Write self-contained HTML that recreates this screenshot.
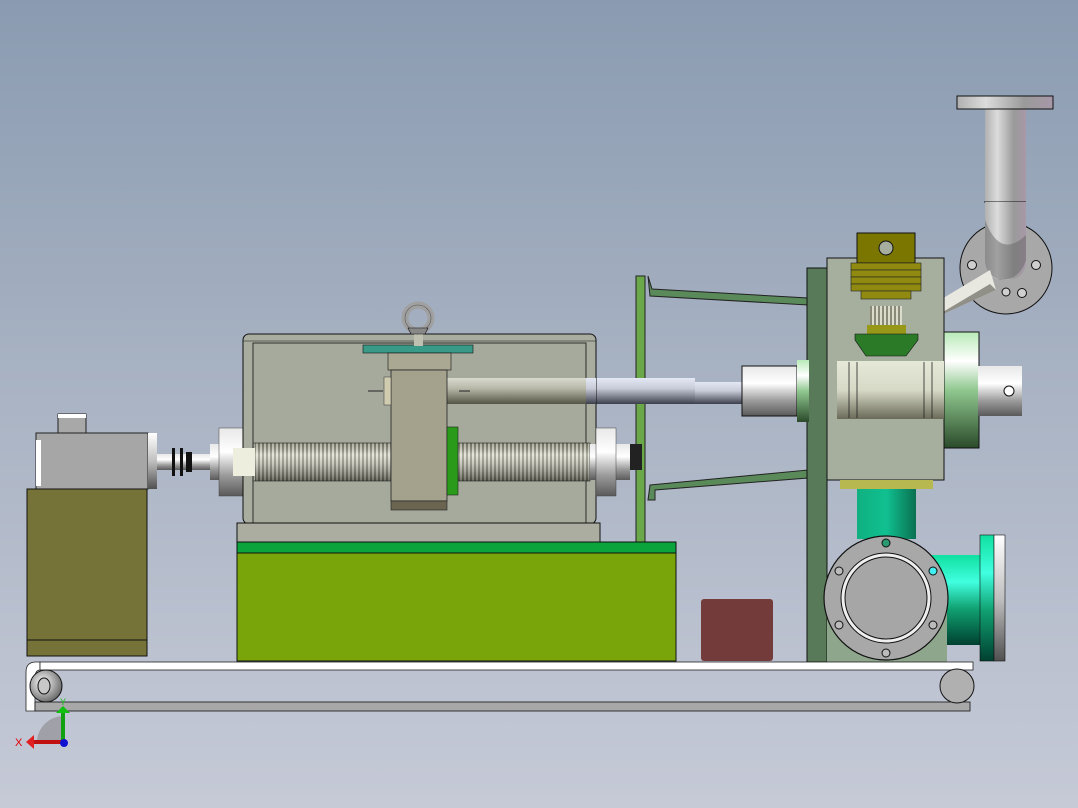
<!DOCTYPE html>
<html><head><meta charset="utf-8"><style>
html,body{margin:0;padding:0;width:1078px;height:808px;overflow:hidden}
body{background:linear-gradient(#8a9bb1,#aab4c4 50%,#c6cad7)}
svg{display:block}
</style></head><body>
<svg width="1078" height="808" viewBox="0 0 1078 808" xmlns="http://www.w3.org/2000/svg" font-family="Liberation Sans, sans-serif">
<defs>
<linearGradient id="cylV" x1="0" y1="0" x2="0" y2="1"><stop offset="0" stop-color="#e8e8e8"/><stop offset=".35" stop-color="#ffffff"/><stop offset=".7" stop-color="#9a9a9a"/><stop offset="1" stop-color="#5a5a5a"/></linearGradient>
<linearGradient id="rodV" x1="0" y1="0" x2="0" y2="1"><stop offset="0" stop-color="#e4e8f4"/><stop offset=".4" stop-color="#c8ccd8"/><stop offset="1" stop-color="#3c3e4c"/></linearGradient>
<linearGradient id="rodIn" x1="0" y1="0" x2="0" y2="1"><stop offset="0" stop-color="#d8dad0"/><stop offset=".4" stop-color="#b8b8a8"/><stop offset="1" stop-color="#555545"/></linearGradient>
<linearGradient id="pipeH" x1="0" y1="0" x2="1" y2="0"><stop offset="0" stop-color="#b0b0b0"/><stop offset=".3" stop-color="#dcdcdc"/><stop offset=".7" stop-color="#9a9a9a"/><stop offset="1" stop-color="#a898a8"/></linearGradient>
<linearGradient id="greenF" x1="0" y1="0" x2="0" y2="1"><stop offset="0" stop-color="#b8eab8"/><stop offset=".25" stop-color="#ffffff"/><stop offset=".5" stop-color="#90c890"/><stop offset="1" stop-color="#2a4a2a"/></linearGradient>
<linearGradient id="tee" x1="0" y1="0" x2="0" y2="1"><stop offset="0" stop-color="#e6e8d8"/><stop offset=".5" stop-color="#d8dac8"/><stop offset="1" stop-color="#6a6a58"/></linearGradient>
<linearGradient id="teal" x1="0" y1="0" x2="1" y2="0"><stop offset="0" stop-color="#10b080"/><stop offset=".5" stop-color="#10c090"/><stop offset="1" stop-color="#0a7050"/></linearGradient>
<linearGradient id="tealH" x1="0" y1="0" x2="0" y2="1"><stop offset="0" stop-color="#10e0a0"/><stop offset=".3" stop-color="#40ffe0"/><stop offset=".6" stop-color="#10a070"/><stop offset="1" stop-color="#004030"/></linearGradient>
<linearGradient id="flR" x1="0" y1="0" x2="0" y2="1"><stop offset="0" stop-color="#ffffff"/><stop offset=".5" stop-color="#c0c0c0"/><stop offset="1" stop-color="#505050"/></linearGradient>
<pattern id="thr" width="4" height="40" patternUnits="userSpaceOnUse"><rect width="4" height="40" fill="#8a8a78"/><rect width="2" height="40" fill="#dcdccc"/></pattern>
<linearGradient id="thrShade" x1="0" y1="0" x2="0" y2="1"><stop offset="0" stop-color="#000" stop-opacity=".2"/><stop offset=".3" stop-color="#fff" stop-opacity=".3"/><stop offset="1" stop-color="#000" stop-opacity=".5"/></linearGradient>
<radialGradient id="roll" cx=".4" cy=".4" r=".6"><stop offset="0" stop-color="#ffffff"/><stop offset="1" stop-color="#707070"/></radialGradient>
</defs>

<!-- Top elbow pipe -->
<circle cx="1006" cy="268" r="46" fill="#a8a8a8" stroke="#111" stroke-width="1"/>
<g fill="#cfcfcf" stroke="#111"><circle cx="1036" cy="265" r="4.5"/><circle cx="1022" cy="293" r="4.5"/><circle cx="972" cy="265" r="4.5"/><circle cx="1006" cy="292" r="4"/></g>
<rect x="985" y="109" width="41" height="95" fill="url(#pipeH)"/>
<line x1="984" y1="202" x2="1026" y2="202" stroke="#111"/>
<path d="M985 202 H1026 V260 Q1026 280 1005 280 Q985 280 985 260Z" fill="url(#pipeH)"/>
<path d="M985 220 Q1000 260 1026 235 V260 Q1020 280 1000 280 Q985 275 985 260Z" fill="#666" opacity=".5"/>
<rect x="957" y="96" width="96" height="13" fill="url(#pipeH)" stroke="#111" stroke-width="1"/>
<path d="M920 312 L990 270 L996 290 L926 322Z" fill="#e8e8e0"/>
<path d="M926 322 L996 290 L990 284 Z" fill="#909088"/>

<!-- Green frame bar and braces -->
<path d="M648 276 L652 289 L808 298 L808 305 L650 296Z" fill="#5a8a5a" stroke="#222" stroke-width="1"/>
<path d="M650 485 L808 470 L808 478 L655 490 L655 500 L648 500Z" fill="#5a8a5a" stroke="#222" stroke-width="1"/>
<rect x="636" y="276" width="9" height="266" fill="#6aa84a" stroke="#222" stroke-width="1"/>

<!-- Rod outside -->
<rect x="596" y="378" width="99" height="26" fill="url(#rodV)"/>
<rect x="695" y="382" width="47" height="22" fill="url(#rodV)"/>
<rect x="742" y="366" width="55" height="50" fill="url(#cylV)" stroke="#111" stroke-width="1"/>

<!-- Motor -->
<rect x="58" y="414" width="28" height="19" fill="#a8a8a8" stroke="#222"/>
<rect x="58" y="414" width="28" height="4" fill="#fff"/>
<rect x="36" y="433" width="112" height="56" fill="#a6a6a6" stroke="#222"/>
<rect x="36" y="440" width="5" height="46" fill="#fff"/>
<rect x="27" y="489" width="120" height="167" fill="#767339" stroke="#111"/>
<line x1="27" y1="640" x2="147" y2="640" stroke="#111"/>
<rect x="148" y="433" width="9" height="56" fill="url(#flR)"/>
<rect x="157" y="454" width="70" height="16" fill="url(#cylV)"/>
<g fill="#111"><rect x="172" y="448" width="3" height="28"/><rect x="180" y="448" width="3" height="28"/><rect x="186" y="452" width="6" height="20"/></g>
<rect x="210" y="444" width="12" height="36" fill="url(#cylV)"/>
<rect x="219" y="428" width="24" height="68" fill="url(#cylV)" stroke="#444" stroke-width=".5"/>

<!-- Enclosure -->
<rect x="243" y="334" width="353" height="190" rx="6" fill="#a8ad9f" stroke="#111"/>
<rect x="253" y="343" width="333" height="181" fill="#a6aa9c" stroke="#111" stroke-width=".8"/>
<line x1="243" y1="341" x2="596" y2="341" stroke="#111" stroke-width=".6"/>
<rect x="445" y="378" width="141" height="26" fill="url(#rodIn)"/>
<rect x="586" y="378" width="10" height="26" fill="url(#rodV)"/>
<rect x="363" y="345" width="110" height="8" fill="#3a9a88" stroke="#111" stroke-width=".6"/>
<rect x="388" y="353" width="63" height="17" fill="#aaa892" stroke="#111" stroke-width=".6"/>
<!-- eye bolt -->
<rect x="414" y="328" width="9" height="18" fill="#c0c0b0"/>
<circle cx="418" cy="318" r="13" fill="none" stroke="#a0a0a0" stroke-width="7"/>
<circle cx="418" cy="318" r="13" fill="none" stroke="#555" stroke-width=".6"/>
<path d="M408 328 H428 L425 334 H411Z" fill="#888" stroke="#111" stroke-width=".6"/>
<!-- screw -->
<rect x="255" y="443" width="135" height="38" fill="url(#thr)"/>
<rect x="458" y="443" width="132" height="38" fill="url(#thr)"/>
<rect x="255" y="443" width="335" height="38" fill="url(#thrShade)"/>
<rect x="253" y="443" width="337" height="38" fill="none" stroke="#222" stroke-width=".6"/>
<rect x="233" y="448" width="22" height="28" fill="#eeeede"/>
<rect x="590" y="444" width="40" height="36" fill="url(#cylV)"/>
<rect x="596" y="428" width="20" height="68" fill="url(#cylV)" stroke="#444" stroke-width=".5"/>
<rect x="630" y="444" width="12" height="26" fill="#222"/>
<!-- nut block -->
<rect x="391" y="370" width="56" height="131" fill="#a4a28c" stroke="#222" stroke-width=".8"/>
<rect x="391" y="501" width="56" height="9" fill="#6a6450" stroke="#222" stroke-width=".6"/>
<rect x="447" y="427" width="11" height="68" fill="#2a9a1a" stroke="#222" stroke-width=".6"/>
<rect x="384" y="377" width="7" height="28" fill="#d0ccb0" stroke="#333" stroke-width=".5"/>
<line x1="368" y1="391" x2="383" y2="391" stroke="#222"/><line x1="459" y1="391" x2="470" y2="391" stroke="#222"/>

<!-- base -->
<rect x="237" y="523" width="363" height="19" fill="#aaad9f" stroke="#111"/>
<rect x="237" y="542" width="439" height="119" fill="#79a50a" stroke="#111"/>
<rect x="237" y="542" width="439" height="11" fill="#0aa33c" stroke="#111"/>
<rect x="701" y="599" width="72" height="62" rx="3" fill="#743b3b"/>

<!-- right assembly -->
<rect x="807" y="268" width="20" height="394" fill="#587a58" stroke="#111"/>
<rect x="944" y="332" width="35" height="116" fill="url(#greenF)" stroke="#111"/>
<rect x="978" y="366" width="44" height="50" fill="url(#cylV)"/>
<circle cx="1009" cy="391" r="5" fill="#fff" stroke="#111"/>
<rect x="797" y="360" width="12" height="62" fill="url(#greenF)"/>
<rect x="827" y="258" width="117" height="222" fill="#a6ae9e" stroke="#111"/>
<rect x="837" y="361" width="107" height="58" fill="url(#tee)"/>
<g stroke="#222" stroke-width=".8"><line x1="849" y1="362" x2="849" y2="418"/><line x1="857" y1="362" x2="857" y2="418"/><line x1="924" y1="362" x2="924" y2="418"/><line x1="932" y1="362" x2="932" y2="418"/></g>
<!-- olive fitting -->
<rect x="857" y="233" width="58" height="30" fill="#7a7600" stroke="#111"/>
<circle cx="886" cy="248" r="7" fill="#a6ae9e" stroke="#111"/>
<g fill="#908a10" stroke="#222" stroke-width=".6"><rect x="851" y="263" width="70" height="7"/><rect x="851" y="270" width="70" height="7"/><rect x="851" y="277" width="70" height="7"/><rect x="851" y="284" width="70" height="7"/><rect x="861" y="291" width="50" height="8"/></g>
<rect x="870" y="306" width="32" height="20" fill="url(#thr)"/>
<rect x="867" y="325" width="39" height="9" fill="#989818"/>
<path d="M855 334 H918 V340 L906 356 H866 L855 340Z" fill="#2a7a28" stroke="#111" stroke-width=".6"/>
<rect x="840" y="480" width="93" height="9" fill="#b8b850"/>
<rect x="857" y="489" width="59" height="50" fill="url(#teal)"/>
<rect x="920" y="555" width="62" height="90" fill="url(#tealH)"/>
<rect x="980" y="535" width="14" height="126" fill="url(#tealH)" stroke="#111" stroke-width=".6"/>
<rect x="994" y="535" width="11" height="126" fill="url(#flR)" stroke="#111" stroke-width=".6"/>
<rect x="827" y="600" width="120" height="62" fill="#8ea68c"/>
<circle cx="886" cy="598" r="62" fill="#a8a8a8" stroke="#111" stroke-width="1.2"/>
<circle cx="886" cy="598" r="45" fill="#eee" stroke="#111"/>
<circle cx="886" cy="598" r="41" fill="#a6a6a6" stroke="#111"/>
<g stroke="#111" fill="#bbb"><circle cx="886" cy="543" r="4" fill="#2a9a70"/><circle cx="933" cy="571" r="4" fill="#40f0f0"/><circle cx="839" cy="571" r="4"/><circle cx="839" cy="625" r="4"/><circle cx="933" cy="625" r="4"/><circle cx="886" cy="653" r="4"/></g>

<!-- conveyor -->
<path d="M26 711 V672 Q26 662 36 662 H40 V670 Q35 670 35 678 V711Z" fill="#fff" stroke="#222" stroke-width=".8"/>
<rect x="40" y="662" width="933" height="8" fill="#fff" stroke="#222" stroke-width=".8"/>
<rect x="35" y="702" width="935" height="9" fill="#a8a8a8" stroke="#111" stroke-width=".8"/>
<circle cx="46" cy="686" r="16" fill="url(#roll)" stroke="#111"/>
<ellipse cx="44" cy="686" rx="6" ry="8" fill="#c8c8c8" stroke="#111"/>
<ellipse cx="957" cy="686" rx="17" ry="17" fill="#b0b0b0" stroke="#111"/>

<!-- triad -->
<path d="M37 740 A27 27 0 0 1 62 716 V740Z" fill="#a0a0a8"/>
<rect x="61" y="713" width="4" height="30" fill="#10a010"/>
<path d="M56 713 L63 706 L70 713Z" fill="#10c010"/>
<rect x="34" y="740" width="30" height="4" fill="#c01010"/>
<path d="M34 735 L26 742 L34 749Z" fill="#e02020"/>
<circle cx="64" cy="743" r="4" fill="#1010d0"/>
<text x="15" y="746" font-size="11" fill="#e00000">X</text>
<text x="60" y="705" font-size="9" fill="#10c010">Y</text>
</svg>
</body></html>
